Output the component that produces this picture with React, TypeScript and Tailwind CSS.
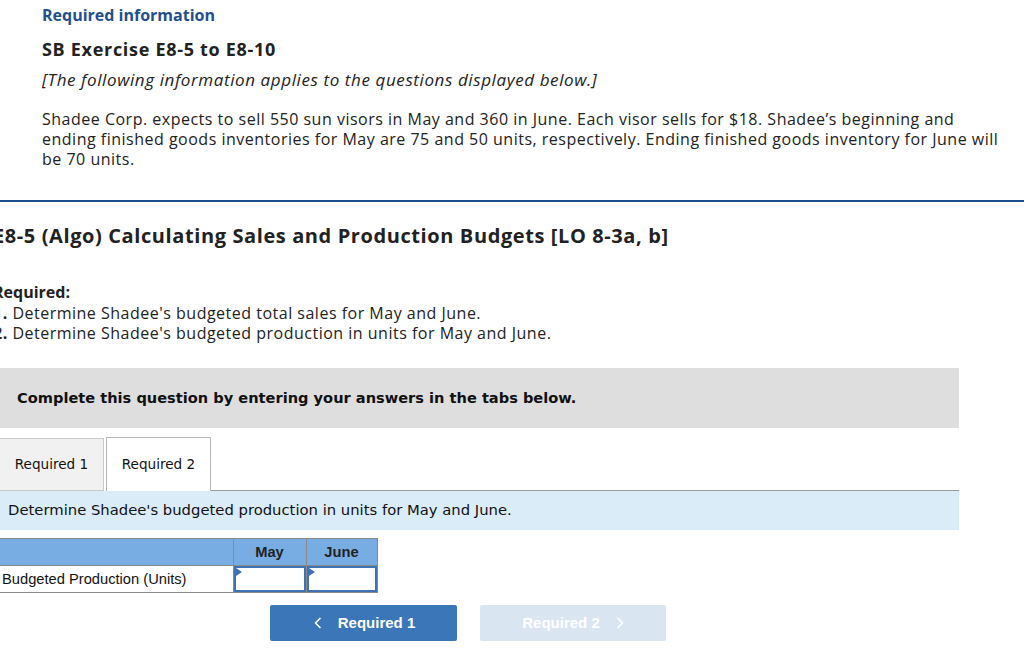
import React from "react";

const top = { fontFamily: "'Open Sans', 'Noto Sans', sans-serif" } as React.CSSProperties;
const verd = { fontFamily: "'DejaVu Sans', Verdana, sans-serif" } as React.CSSProperties;
const arial = { fontFamily: "'Liberation Sans', Arial, sans-serif" } as React.CSSProperties;

function InputCell() {
  return (
    <td className="border border-[#8a8a8a] p-0 h-[27px] bg-white">
      <div className="relative w-full h-[26px] border-2 border-[#3d73b4] bg-white">
        <svg className="absolute left-0 top-0" width="6" height="8" viewBox="0 0 6 8">
          <path d="M0 0 L6 4 L0 8 Z" fill="#3d73b4" />
        </svg>
      </div>
    </td>
  );
}

export default function App() {
  return (
    <div className="w-[1024px] h-[656px] overflow-hidden bg-white text-[#222]">
      <div className="pl-[42px] pt-[4px]" style={top}>
        <div className="text-[16px] font-bold text-[#1f4f8c] leading-[22px]">Required information</div>
        <div className="mt-[11px] text-[18px] font-bold leading-[24px] tracking-[0.7px] text-[#222]">SB Exercise E8-5 to E8-10</div>
        <div className="mt-[9px] text-[17px] italic leading-[20px] tracking-[0.6px]">[The following information applies to the questions displayed below.]</div>
        <div className="mt-[19px] text-[16px] leading-[20px] tracking-[0.5px] whitespace-nowrap">
          Shadee Corp. expects to sell 550 sun visors in May and 360 in June. Each visor sells for $18. Shadee’s beginning and
          <br />
          ending finished goods inventories for May are 75 and 50 units, respectively. Ending finished goods inventory for June will
          <br />
          be 70 units.
        </div>
      </div>
      <div className="mt-[31px] h-[2px] bg-[#1b4f8a]" />

      <div className="ml-[-7px]" style={top}>
        <div className="mt-[21px] text-[20px] font-bold leading-[26px] tracking-[0.6px] whitespace-nowrap">E8-5 (Algo) Calculating Sales and Production Budgets [LO 8-3a, b]</div>
        <div className="mt-[33px] text-[16px] font-bold leading-[20px]">Required:</div>
        <div className="mt-[1px] text-[16px] leading-[20px] tracking-[0.5px]"><b>1.</b> Determine Shadee's budgeted total sales for May and June.</div>
        <div className="text-[16px] leading-[20px] tracking-[0.5px]"><b>2.</b> Determine Shadee's budgeted production in units for May and June.</div>
      </div>

      <div className="w-[959px]">
        <div className="mt-[25px] h-[60px] bg-[#dedede] flex items-center pl-[17px]" style={verd}>
          <span className="text-[14.6px] font-bold text-[#111]">Complete this question by entering your answers in the tabs below.</span>
        </div>

        <div className="mt-[9px] flex items-end h-[54px]" style={verd}>
          <div className="w-[104px] h-[53px] bg-[#f1f1f1] border border-[#c8c8c8] border-l-0 flex items-center justify-center text-[13.6px] text-[#111]">Required 1</div>
          <div className="ml-[2px] w-[105px] h-[54px] bg-white border border-[#b5b5b5] border-b-0 flex items-center justify-center text-[13.6px] text-[#111]">Required 2</div>
          <div className="flex-1 border-b border-[#9a9a9a]" />
        </div>

        <div className="h-[39px] bg-[#dbecf9] flex items-center pl-[8px]" style={verd}>
          <span className="text-[14.8px] text-[#111]">Determine Shadee's budgeted production in units for May and June.</span>
        </div>
      </div>

      <table className="mt-[8px] border-collapse table-fixed w-[377px]" style={arial}>
        <colgroup>
          <col className="w-[233px]" />
          <col className="w-[73px]" />
          <col className="w-[71px]" />
        </colgroup>
        <tbody>
          <tr className="h-[27px] bg-[#78ade3]">
            <td className="border border-[#8a8a8a] border-l-0" />
            <td className="border border-[#8a8a8a] text-center text-[14.7px] font-bold text-[#222]">May</td>
            <td className="border border-[#8a8a8a] text-center text-[14.7px] font-bold text-[#222]">June</td>
          </tr>
          <tr className="h-[27px]">
            <td className="border border-[#8a8a8a] border-l-0 pl-[2px] text-[14.7px] text-[#111] whitespace-nowrap">Budgeted Production (Units)</td>
            <InputCell />
            <InputCell />
          </tr>
        </tbody>
      </table>

      <div className="mt-[12px] flex" style={arial}>
        <div className="ml-[270px] w-[187px] h-[36px] rounded-[2px] bg-[#3a76b8] flex items-center justify-center gap-[16px] pl-[2px] text-white text-[15px] font-bold">
          <svg width="8" height="12" viewBox="0 0 8 12"><path d="M6.5 1 L1.5 6 L6.5 11" stroke="white" strokeWidth="1.6" fill="none" /></svg>
          <span>Required 1</span>
        </div>
        <div className="ml-[23px] w-[186px] h-[36px] rounded-[2px] bg-[#d9e5f1] flex items-center justify-center gap-[16px] text-white text-[15px] font-bold">
          <span>Required 2</span>
          <svg width="8" height="12" viewBox="0 0 8 12"><path d="M1.5 1 L6.5 6 L1.5 11" stroke="white" strokeWidth="1.6" fill="none" /></svg>
        </div>
      </div>
    </div>
  );
}
